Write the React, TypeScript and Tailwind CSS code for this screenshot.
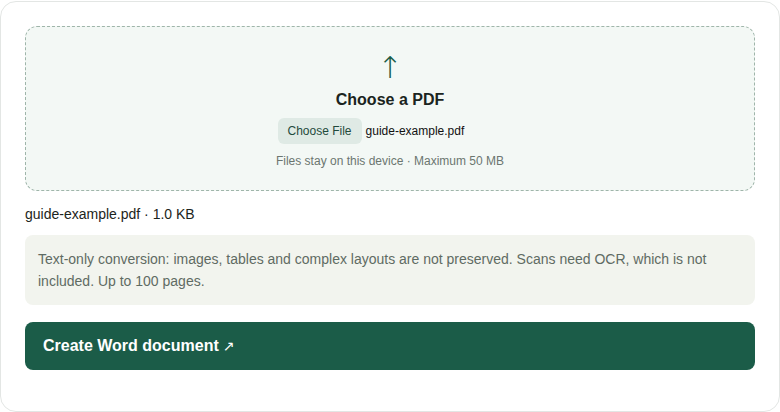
export default function App() {
  return (
    <div className="pt-px" style={{ fontFamily: '"Liberation Sans", Arial, sans-serif' }}>
      <div className="mx-0 rounded-2xl border border-[#e3e6e4] bg-white px-6 pt-6 pb-[41px]">
        {/* Drop zone */}
        <div className="flex h-[165px] flex-col items-center rounded-xl border border-dashed border-[#9fb5aa] bg-[#f3f8f5] pt-[26px]">
          <div className="text-[30px] font-light leading-none text-[#1b5c48]" style={{ fontFamily: '"DejaVu Sans", sans-serif' }}>
            ↑
          </div>
          <div className="mt-[5px] text-base font-bold text-[#1a2420]">Choose a PDF</div>
          <div className="mt-[6px] flex w-[225px] items-center gap-1">
            <span className="rounded-md bg-[#dfeae5] px-[10px] py-[5px] text-xs text-[#1f4a3c]">Choose File</span>
            <span className="text-xs text-[#111]">guide-example.pdf</span>
          </div>
          <div className="mt-[9px] text-xs text-[#6b7670]">Files stay on this device · Maximum 50 MB</div>
        </div>

        <div className="mt-[13px] text-sm leading-5 text-[#1c2420]">guide-example.pdf · 1.0 KB</div>

        <div className="mt-[11px] rounded-lg bg-[#f2f4ee] px-[13px] py-[13px] text-sm leading-[22px] text-[#5f6b63]">
          Text-only conversion: images, tables and complex layouts are not preserved. Scans need OCR, which is not
          included. Up to 100 pages.
        </div>

        <button className="mt-[17px] flex h-12 w-full items-center rounded-lg bg-[#1b5c48] px-[18px] text-base font-bold text-white">
          Create Word document <span className="ml-1 text-sm font-normal" style={{ fontFamily: '"DejaVu Sans", sans-serif' }}>↗</span>
        </button>
      </div>
    </div>
  );
}
